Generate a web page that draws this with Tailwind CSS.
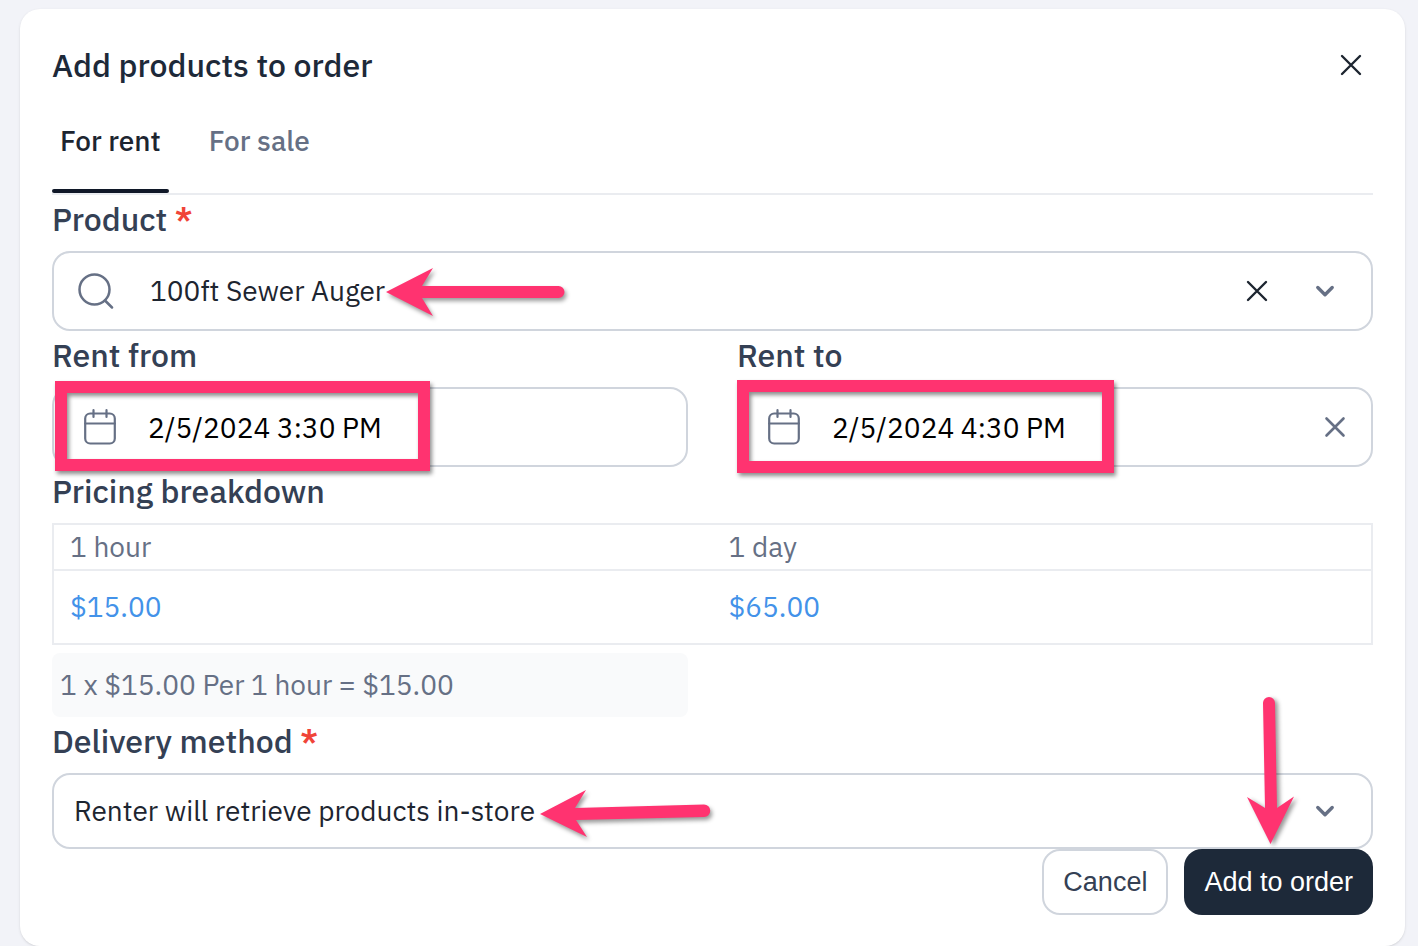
<!DOCTYPE html>
<html lang="en">
<head>
    <meta charset="UTF-8">
    <meta name="viewport" content="width=device-width, initial-scale=1.0">
    <title>Add products to order</title>
    <script src="https://cdn.jsdelivr.net/npm/@tailwindcss/browser@4"></script>
</head>
<body class="flex min-h-screen flex-col bg-[#f2f3f8] pt-[9px] pr-[13px] pl-5 font-['IBM_Plex_Sans',Roboto,sans-serif] text-[28px] text-[#1d2530]">
    <main class="grow rounded-[20px] bg-white px-8 pt-8 pb-7 shadow-sm">
        <div class="flex items-center justify-between">
            <h1 class="text-[32px] leading-[48px] font-medium text-[#1d2939]">Add products to order</h1>
            <button type="button" aria-label="Close" class="p-2.5">
                <svg class="size-6" viewBox="0 0 24 24" fill="none" stroke="#1d2530" stroke-width="2.4" stroke-linecap="round"><path d="M3 3l18 18M21 3L3 21"/></svg>
            </button>
        </div>

        <!-- Tabs -->
        <div role="tablist" class="flex gap-8 border-b-2 border-[#eaecf0] pt-[30px] font-medium">
            <button type="button" role="tab" aria-selected="true">
                <span class="block px-2 pb-[26px] leading-[44px]">For rent</span>
                <span class="block h-1 rounded-full bg-[#101828]"></span>
            </button>
            <button type="button" role="tab" aria-selected="false" class="text-[#667085]">
                <span class="block px-2 pb-[30px] leading-[44px]">For sale</span>
            </button>
        </div>

        <form>
            <label for="product" class="block h-14 pt-1 text-[32px] leading-[40px] font-medium text-[#344054]">Product <span class="font-semibold text-[#f04438]">*</span></label>
            <div class="relative">
                <div class="flex h-20 items-center rounded-[18px] border-2 border-[#d0d5dd] pr-[26px] pl-6">
                    <svg class="size-9 shrink-0" viewBox="0 0 36 36" fill="none" stroke="#667085" stroke-width="2.5" stroke-linecap="round"><circle cx="16.500" cy="16.500" r="15"/><path d="M27 27.500L34 34.500"/></svg>
                    <input id="product" name="product" type="text" value="100ft Sewer Auger" class="ml-9 min-w-0 grow outline-none">
                    <button type="button" aria-label="Clear product" class="p-2">
                        <svg class="size-6" viewBox="0 0 24 24" fill="none" stroke="#1d2530" stroke-width="2.4" stroke-linecap="round"><path d="M3 3l18 18M21 3L3 21"/></svg>
                    </button>
                    <button type="button" aria-label="Show products" class="ml-7 p-2">
                        <svg class="size-6" viewBox="0 0 24 24" fill="none" stroke="#667085" stroke-width="3.4" stroke-linecap="round" stroke-linejoin="round"><path d="M4.800 8.500L12 15.700L19.200 8.500"/></svg>
                    </button>
                </div>
                <svg class="pointer-events-none absolute top-[17px] left-[334px] h-12 w-[180px] overflow-visible drop-shadow-[2px_3px_2px_rgb(0_0_0/0.4)]" viewBox="0 0 180 48" fill="#ff3370"><path d="M0 24L47 0L36 18H172.500A6 6 0 0 1 172.500 30H36L47 48Z"/></svg>
            </div>

            <div class="grid grid-cols-2 gap-[49px]">
                <div>
                    <label for="from" class="block h-14 pt-1 text-[32px] leading-[40px] font-medium text-[#344054]">Rent from</label>
                    <div class="relative">
                        <div class="flex h-20 items-center rounded-[18px] border-2 border-[#d0d5dd] px-[30px]">
                            <svg class="h-9 w-8 shrink-0" viewBox="0 0 32 36" fill="none" stroke="#667085" stroke-width="2.200" stroke-linecap="round"><rect x="1.200" y="4.500" width="29.600" height="30" rx="5"/><path d="M1.200 14.500H30.800M9.500 1.200V8M22.500 1.200V8"/></svg>
                            <input id="from" name="from" type="text" value="2/5/2024 3:30 PM" class="ml-8 min-w-0 grow pt-0.5 text-black outline-none">
                        </div>
                        <div class="pointer-events-none absolute -top-1.5 left-[3px] h-[90px] w-[375px] border-[12px] border-[#ff3370] drop-shadow-[2px_3px_2px_rgb(0_0_0/0.45)]"></div>
                    </div>
                </div>
                <div>
                    <label for="to" class="block h-14 pt-1 text-[32px] leading-[40px] font-medium text-[#344054]">Rent to</label>
                    <div class="relative">
                        <div class="flex h-20 items-center rounded-[18px] border-2 border-[#d0d5dd] pr-4 pl-[29px]">
                            <svg class="h-9 w-8 shrink-0" viewBox="0 0 32 36" fill="none" stroke="#667085" stroke-width="2.200" stroke-linecap="round"><rect x="1.200" y="4.500" width="29.600" height="30" rx="5"/><path d="M1.200 14.500H30.800M9.500 1.200V8M22.500 1.200V8"/></svg>
                            <input id="to" name="to" type="text" value="2/5/2024 4:30 PM" class="ml-8 min-w-0 grow pt-0.5 text-black outline-none">
                            <button type="button" aria-label="Clear end date" class="p-2">
                                <svg class="size-6" viewBox="0 0 24 24" fill="none" stroke="#667085" stroke-width="2.600" stroke-linecap="round"><path d="M3.500 3.500l17 17M20.500 3.500l-17 17"/></svg>
                            </button>
                        </div>
                        <div class="pointer-events-none absolute -top-[7px] left-0 h-[93px] w-[377px] border-[12px] border-[#ff3370] drop-shadow-[2px_3px_2px_rgb(0_0_0/0.45)]"></div>
                    </div>
                </div>
            </div>

            <h2 id="pricing" class="h-14 pt-1 text-[32px] leading-[40px] font-medium text-[#344054]">Pricing breakdown</h2>
            <table aria-labelledby="pricing" class="w-full table-fixed border-separate border-spacing-0 border-2 border-[#eaecf0] text-left">
                <thead>
                    <tr class="h-[46px] text-[#667085]">
                        <th class="border-b-2 border-[#eaecf0] px-4 leading-[44px] font-normal">1 hour</th>
                        <th class="border-b-2 border-[#eaecf0] px-4 leading-[44px] font-normal">1 day</th>
                    </tr>
                </thead>
                <tbody>
                    <tr class="h-[72px] text-[#4392e9]">
                        <td class="px-4">$15.00</td>
                        <td class="px-4">$65.00</td>
                    </tr>
                </tbody>
            </table>
            <div class="grid grid-cols-2 gap-[49px] pt-2">
                <p class="rounded-lg bg-[#f9fafb] px-2 leading-[64px] text-[#667085]">1 x $15.00 Per 1 hour = $15.00</p>
            </div>

            <label for="delivery" class="block h-14 pt-1 text-[32px] leading-[40px] font-medium text-[#344054]">Delivery method <span class="font-semibold text-[#f04438]">*</span></label>
            <div class="relative">
                <select id="delivery" name="delivery" class="block h-[76px] w-full appearance-none rounded-[18px] border-2 border-[#d0d5dd] px-5 outline-none">
                    <option>Renter will retrieve products in-store</option>
                </select>
                <svg class="pointer-events-none absolute top-[26px] right-9 size-6" viewBox="0 0 24 24" fill="none" stroke="#667085" stroke-width="3.400" stroke-linecap="round" stroke-linejoin="round"><path d="M4.800 8.500L12 15.700L19.200 8.500"/></svg>
                <svg class="pointer-events-none absolute top-[17px] left-[488px] h-12 w-[170px] overflow-visible drop-shadow-[2px_3px_2px_rgb(0_0_0/0.4)]" viewBox="0 0 170 48" fill="#ff3370"><path d="M0 24L46 0L35 18L164 14.500A6 6 0 0 1 164 27L36 30L47 47Z"/></svg>
                <svg class="pointer-events-none absolute -top-[76px] right-[79px] h-[147px] w-12 overflow-visible drop-shadow-[3px_2px_2px_rgb(0_0_0/0.4)]" viewBox="0 0 48 147" fill="#ff3370"><path d="M24.500 147L1 100L19 111L17 6A6 6 0 0 1 29 6L31 111L48 99.500Z"/></svg>
            </div>

            <div class="flex justify-end gap-4 font-['Liberation_Sans',Arial,sans-serif] text-[27px]">
                <button type="button" class="h-[66px] rounded-[18px] border-2 border-[#d0d5dd] px-[19px] text-[#344054]">Cancel</button>
                <button type="submit" class="h-[66px] rounded-[18px] bg-[#1d2939] px-5 text-white">Add to order</button>
            </div>
        </form>
    </main>
</body>
</html>
